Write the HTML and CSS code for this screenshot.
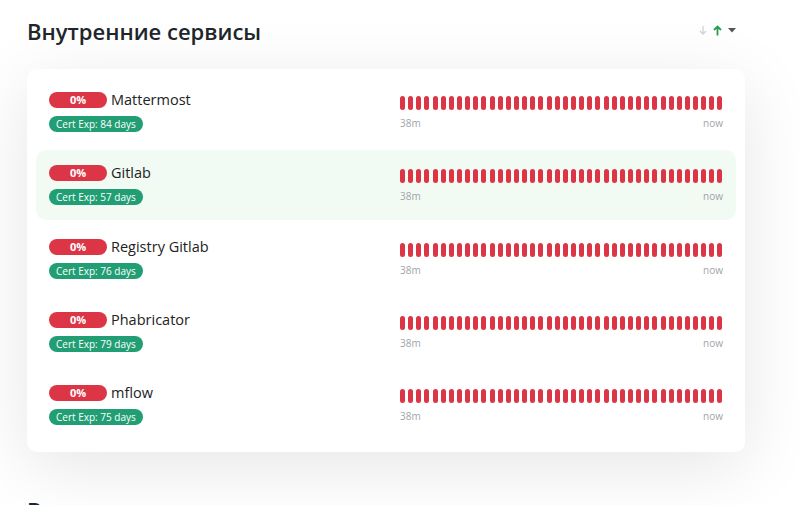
FILE: index.html
```html
<!DOCTYPE html>
<html lang="ru">
<head>
<meta charset="utf-8">
<title>Status</title>
<link rel="stylesheet" href="styles.css">
</head>
<body>
<div class="page">
  <div class="group-head">
    <h2 class="group-title">Внутренние сервисы</h2>
    <div class="sort">
      <svg class="ar down" width="8" height="11" viewBox="0 0 8 11"><path d="M4 1v8M1 6l3 3 3-3" fill="none" stroke="#cfd3d6" stroke-width="1.3"/></svg>
      <svg class="ar up" width="9" height="11" viewBox="0 0 9 11"><path d="M4.5 10.5V1.5M1 5l3.5-3.5L8 5" fill="none" stroke="#2a9d4b" stroke-width="1.8"/></svg>
      <svg class="caret" width="8" height="5" viewBox="0 0 8 5"><path d="M0 0h8L4 4.5z" fill="#555"/></svg>
    </div>
  </div>
  <div class="card" id="list"></div>
  <h2 class="group-title next">Внешние сервисы</h2>
</div>
<script src="app.js"></script>
</body>
</html>
```
FILE: app.js
```js
var items = [
  ["Mattermost", 84, false],
  ["Gitlab", 57, true],
  ["Registry Gitlab", 76, false],
  ["Phabricator", 79, false],
  ["mflow", 75, false]
];
var list = document.getElementById("list");
items.forEach(function (it) {
  var beats = "";
  for (var i = 0; i < 40; i++) beats += '<span class="beat"></span>';
  var el = document.createElement("div");
  el.className = "item" + (it[2] ? " hover" : "");
  el.innerHTML =
    '<div class="info">' +
      '<div class="name-line"><span class="pct">0%</span><span class="name">' + it[0] + '</span></div>' +
      '<span class="cert">Cert Exp: ' + it[1] + ' days</span>' +
    '</div>' +
    '<div class="bar">' +
      '<div class="beats">' + beats + '</div>' +
      '<div class="times"><span>38m</span><span>now</span></div>' +
    '</div>';
  list.appendChild(el);
});
```
FILE: styles.css
```css
html, body {
  margin: 0;
  padding: 0;
  background: #fff;
  font-family: "Open Sans", "Noto Sans", sans-serif;
  color: #212529;
}
.page {
  width: 718px;
  padding: 0 0 0 27px;
}
.group-head {
  display: flex;
  align-items: center;
  justify-content: space-between;
  height: 69px;
}
.group-title {
  margin: 0;
  font-size: 22px;
  font-weight: 600;
  line-height: 1.2;
}
.group-head .group-title {
  margin-top: -6px;
}
.sort {
  display: flex;
  align-items: center;
  gap: 6px;
  margin-right: 9px;
  margin-top: -8px;
}
.card {
  background: #fff;
  border-radius: 10px;
  box-shadow: 0 15px 70px rgba(0, 0, 0, 0.1);
  padding: 8px 9px 12px;
  display: flex;
  flex-direction: column;
  gap: 3.25px;
}
.item {
  display: flex;
  justify-content: space-between;
  padding: 15px 13px;
  height: 40px;
  border-radius: 10px;
}
.item.hover {
  background: #f1fbf4;
}
.info {
  display: flex;
  flex-direction: column;
  gap: 8px;
}
.name-line {
  display: flex;
  align-items: center;
  gap: 4px;
  height: 16px;
}
.pct {
  display: inline-block;
  width: 58px;
  height: 16px;
  line-height: 16px;
  border-radius: 8px;
  background: #dc3545;
  color: #fff;
  font-size: 11px;
  font-weight: 700;
  text-align: center;
}
.name {
  font-size: 14.5px;
  line-height: 16px;
  color: #222;
}
.cert {
  display: inline-block;
  align-self: flex-start;
  height: 16px;
  line-height: 16px;
  padding: 0 7px;
  border-radius: 8px;
  background: #229e74;
  color: #fff;
  font-size: 10px;
  font-weight: 500;
}
.bar {
  width: 323px;
  padding-top: 4px;
}
.beats {
  display: flex;
  justify-content: space-between;
  height: 14px;
}
.beat {
  width: 5px;
  height: 14px;
  border-radius: 3px;
  background: #dc3545;
}
.times {
  display: flex;
  justify-content: space-between;
  margin-top: 7px;
  font-size: 10px;
  color: #a0a4a8;
  line-height: 12px;
}
.group-title.next {
  margin-top: 45px;
}
```
